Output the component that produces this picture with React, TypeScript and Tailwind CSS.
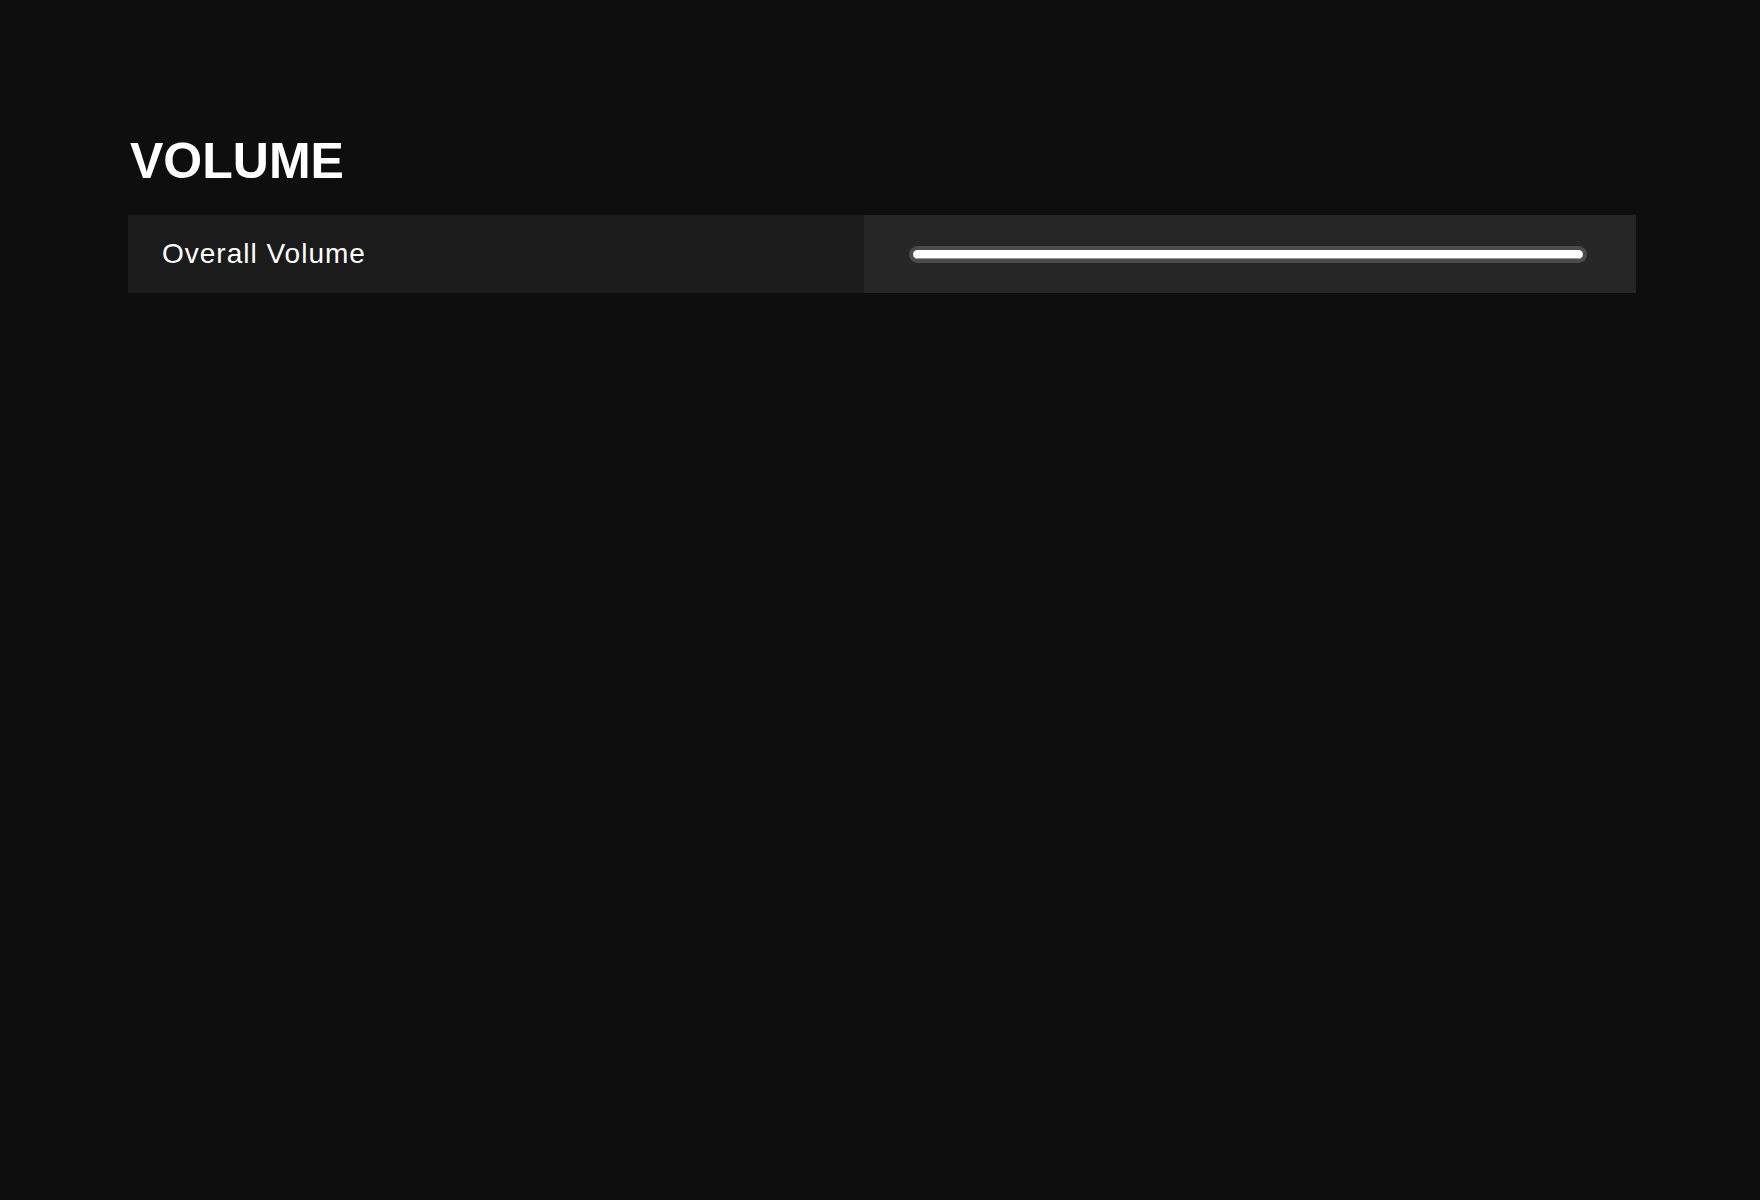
import React from 'react'

const App: React.FC = () => {
  const volume = 100

  return (
    <div className="min-h-screen w-full bg-[#0e0e0e] pt-[136px] pl-[128px]" style={{ fontFamily: '"Liberation Sans", Arial, sans-serif' }}>
      <div className="w-[1508px]">
        <h1 className="pl-[2px] text-[50px] font-bold leading-none text-white">VOLUME</h1>

        <div className="mt-[29px] flex h-[78px]">
          <div className="flex w-[736px] items-center bg-[#1b1b1b] pl-[34px]">
            <span className="text-[28px] tracking-[1px] text-white">Overall Volume</span>
          </div>
          <div className="flex flex-1 items-center bg-[#262626] pl-[45px] pr-[49px]">
            <div className="h-[17px] w-full rounded-full bg-[#4b4b4b] p-[4px]">
              <div className="h-full rounded-full bg-white shadow-[inset_0_-1px_0_#9a9a9a]" style={{ width: `${volume}%` }} />
            </div>
          </div>
        </div>
      </div>
    </div>
  )
}

export default App
